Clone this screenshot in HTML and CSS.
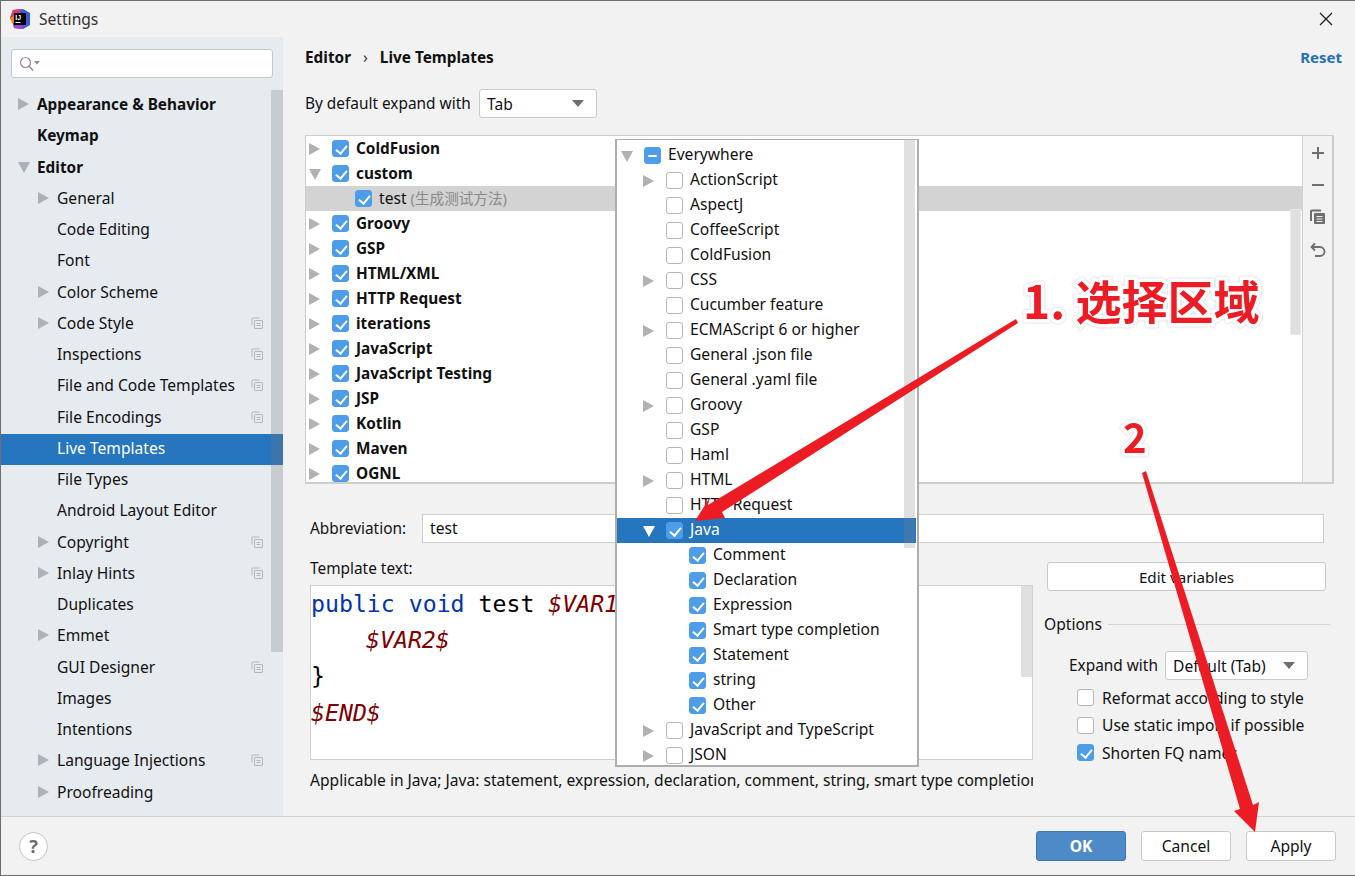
FILE: index.html
```html
<!DOCTYPE html>
<html lang="en">
<head>
<meta charset="utf-8">
<title>Settings</title>
<link rel="stylesheet" href="styles.css">
</head>
<body>
<svg class="defs" width="0" height="0" aria-hidden="true">
  <symbol id="copy" viewBox="0 0 12 12"><path d="M1 8.5V1.5a.5.5 0 0 1 .5-.5H8.500" fill="none" stroke="#b4b8bc"/><rect x="3.500" y="3.500" width="8" height="8" rx=".5" fill="none" stroke="#b4b8bc"/><path d="M5.500 6.500h4M5.500 8.500h4" stroke="#b4b8bc"/></symbol>
</svg>
<div class="window">
  <header class="titlebar">
    <svg class="logo" viewBox="0 0 20 20" width="20" height="20">
      <path d="M3 1 L13 0 L20 4 L20 16 L13 20 L4 19 L2 12 L0 9 Z" fill="#3b5bdb"/>
      <path d="M3 1 L10 0 L9 8 L2 12 L0 9 Z" fill="#e8336d"/>
      <path d="M0 9 L4 7 L5 14 L2 14 Z" fill="#f58220"/>
      <path d="M4 19 L10 20 L14 17 L5 15 Z" fill="#b23bd6"/>
      <rect x="4" y="4" width="12" height="12" fill="#000"/>
      <text x="5.200" y="10.500" class="logo-text">IJ</text>
      <rect x="5.500" y="13" width="5" height="1" fill="#fff"/>
    </svg>
    <span class="title">Settings</span>
    <svg class="close" viewBox="0 0 14 14" width="14" height="14"><path d="M1 1L13 13M13 1L1 13" stroke="#222" stroke-width="1.300" fill="none"/></svg>
  </header>
  <div class="body">
    <aside class="sidebar">
      <div class="search">
        <svg viewBox="0 0 22 16" width="22" height="16"><circle cx="6.500" cy="6.500" r="5" fill="none" stroke="#8a8f94" stroke-width="1.200"/><path d="M10 10L14 14.500" stroke="#8a8f94" stroke-width="1.500"/><path d="M15 5h6l-3 3.500z" fill="#8a8f94"/></svg>
      </div>
      <nav class="nav">
        <div class="nav-row l0 bold"><i class="tw r"></i><span>Appearance &amp; Behavior</span></div>
        <div class="nav-row l0 bold"><i class="tw"></i><span>Keymap</span></div>
        <div class="nav-row l0 bold"><i class="tw d"></i><span>Editor</span></div>
        <div class="nav-row l1"><i class="tw r"></i><span>General</span></div>
        <div class="nav-row l1"><i class="tw"></i><span>Code Editing</span></div>
        <div class="nav-row l1"><i class="tw"></i><span>Font</span></div>
        <div class="nav-row l1"><i class="tw r"></i><span>Color Scheme</span></div>
        <div class="nav-row l1"><i class="tw r"></i><span>Code Style</span><svg class="pc"><use href="#copy"/></svg></div>
        <div class="nav-row l1"><i class="tw"></i><span>Inspections</span><svg class="pc"><use href="#copy"/></svg></div>
        <div class="nav-row l1"><i class="tw"></i><span>File and Code Templates</span><svg class="pc"><use href="#copy"/></svg></div>
        <div class="nav-row l1"><i class="tw"></i><span>File Encodings</span><svg class="pc"><use href="#copy"/></svg></div>
        <div class="nav-row l1 sel"><i class="tw"></i><span>Live Templates</span></div>
        <div class="nav-row l1"><i class="tw"></i><span>File Types</span></div>
        <div class="nav-row l1"><i class="tw"></i><span>Android Layout Editor</span></div>
        <div class="nav-row l1"><i class="tw r"></i><span>Copyright</span><svg class="pc"><use href="#copy"/></svg></div>
        <div class="nav-row l1"><i class="tw r"></i><span>Inlay Hints</span><svg class="pc"><use href="#copy"/></svg></div>
        <div class="nav-row l1"><i class="tw"></i><span>Duplicates</span></div>
        <div class="nav-row l1"><i class="tw r"></i><span>Emmet</span></div>
        <div class="nav-row l1"><i class="tw"></i><span>GUI Designer</span><svg class="pc"><use href="#copy"/></svg></div>
        <div class="nav-row l1"><i class="tw"></i><span>Images</span></div>
        <div class="nav-row l1"><i class="tw"></i><span>Intentions</span></div>
        <div class="nav-row l1"><i class="tw r"></i><span>Language Injections</span><svg class="pc"><use href="#copy"/></svg></div>
        <div class="nav-row l1"><i class="tw r"></i><span>Proofreading</span></div>
      </nav>
      <div class="side-scroll"></div>
    </aside>
    <main class="main">
      <div class="crumbs"><b>Editor</b><span class="sep">›</span><b>Live Templates</b><a class="reset">Reset</a></div>
      <div class="expand-row"><span class="expand-label">By default expand with</span><div class="combo tab-combo"><span>Tab</span><i class="caret"></i></div></div>
      <section class="list-box">
        <div class="list">
          <div class="row bold"><i class="tw r"></i><i class="cb on"></i><span>ColdFusion</span></div>
          <div class="row bold"><i class="tw d"></i><i class="cb on"></i><span>custom</span></div>
          <div class="row child"><i class="cb on"></i><span>test <em class="desc">(生成测试方法)</em></span></div>
          <div class="row bold"><i class="tw r"></i><i class="cb on"></i><span>Groovy</span></div>
          <div class="row bold"><i class="tw r"></i><i class="cb on"></i><span>GSP</span></div>
          <div class="row bold"><i class="tw r"></i><i class="cb on"></i><span>HTML/XML</span></div>
          <div class="row bold"><i class="tw r"></i><i class="cb on"></i><span>HTTP Request</span></div>
          <div class="row bold"><i class="tw r"></i><i class="cb on"></i><span>iterations</span></div>
          <div class="row bold"><i class="tw r"></i><i class="cb on"></i><span>JavaScript</span></div>
          <div class="row bold"><i class="tw r"></i><i class="cb on"></i><span>JavaScript Testing</span></div>
          <div class="row bold"><i class="tw r"></i><i class="cb on"></i><span>JSP</span></div>
          <div class="row bold"><i class="tw r"></i><i class="cb on"></i><span>Kotlin</span></div>
          <div class="row bold"><i class="tw r"></i><i class="cb on"></i><span>Maven</span></div>
          <div class="row bold"><i class="tw r"></i><i class="cb on"></i><span>OGNL</span></div>
          <div class="list-scroll"></div>
        </div>
        <div class="tools">
          <svg viewBox="0 0 14 14" width="14" height="14"><path d="M7 1v12M1 7h12" stroke="#6e6e6e" stroke-width="2" fill="none"/></svg>
          <svg viewBox="0 0 14 14" width="14" height="14"><path d="M1 7h12" stroke="#6e6e6e" stroke-width="2" fill="none"/></svg>
          <svg viewBox="0 0 16 16" width="16" height="16"><path d="M1 12V2.500a1 1 0 0 1 1-1H11" fill="none" stroke="#6e6e6e" stroke-width="2"/><rect x="4" y="4" width="11" height="11" rx="1" fill="#6e6e6e"/><path d="M6.500 7.500h6M6.500 10h6M6.500 12.500h6" stroke="#f2f2f2"/></svg>
          <svg viewBox="0 0 16 16" width="16" height="16"><path d="M5 1.500L1.500 5 5 8.500" fill="none" stroke="#6e6e6e" stroke-width="1.800"/><path d="M2 5h8a4.500 4.500 0 0 1 0 9H5" fill="none" stroke="#6e6e6e" stroke-width="1.800"/></svg>
        </div>
      </section>
      <div class="abbr-row"><label>Abbreviation:</label><div class="field">test</div></div>
      <div class="lower">
        <div class="left-col">
          <div class="tpl-label">Template text:</div>
          <div class="editor">
            <div><span class="kw">public void</span> test <span class="var">$VAR1$</span></div>
            <div class="indent"><span class="var">$VAR2$</span></div>
            <div>}</div>
            <div><span class="var">$END$</span></div>
            <div class="ed-scroll"></div>
          </div>
          <div class="note">Applicable in Java; Java: statement, expression, declaration, comment, string, smart type completion, other</div>
        </div>
        <div class="right-col">
          <button class="btn edit">Edit variables</button>
          <div class="options-head"><span>Options</span><i></i></div>
          <div class="opt-expand"><span class="opt-label">Expand with</span><div class="combo def-combo"><span>Default (Tab)</span><i class="caret"></i></div></div>
          <div class="opt"><i class="cb"></i><span>Reformat according to style</span></div>
          <div class="opt"><i class="cb"></i><span>Use static import if possible</span></div>
          <div class="opt"><i class="cb on"></i><span>Shorten FQ names</span></div>
        </div>
      </div>
    </main>
  </div>
  <footer class="footer">
    <div class="help">?</div>
    <div class="actions">
      <button class="btn primary">OK</button>
      <button class="btn">Cancel</button>
      <button class="btn">Apply</button>
    </div>
  </footer>

  <div class="popup">
    <div class="prow"><i class="tw d"></i><i class="cb mixed"></i><span>Everywhere</span></div>
    <div class="prow p1"><i class="tw r"></i><i class="cb"></i><span>ActionScript</span></div>
    <div class="prow p1"><i class="tw"></i><i class="cb"></i><span>AspectJ</span></div>
    <div class="prow p1"><i class="tw"></i><i class="cb"></i><span>CoffeeScript</span></div>
    <div class="prow p1"><i class="tw"></i><i class="cb"></i><span>ColdFusion</span></div>
    <div class="prow p1"><i class="tw r"></i><i class="cb"></i><span>CSS</span></div>
    <div class="prow p1"><i class="tw"></i><i class="cb"></i><span>Cucumber feature</span></div>
    <div class="prow p1"><i class="tw r"></i><i class="cb"></i><span>ECMAScript 6 or higher</span></div>
    <div class="prow p1"><i class="tw"></i><i class="cb"></i><span>General .json file</span></div>
    <div class="prow p1"><i class="tw"></i><i class="cb"></i><span>General .yaml file</span></div>
    <div class="prow p1"><i class="tw r"></i><i class="cb"></i><span>Groovy</span></div>
    <div class="prow p1"><i class="tw"></i><i class="cb"></i><span>GSP</span></div>
    <div class="prow p1"><i class="tw"></i><i class="cb"></i><span>Haml</span></div>
    <div class="prow p1"><i class="tw r"></i><i class="cb"></i><span>HTML</span></div>
    <div class="prow p1"><i class="tw"></i><i class="cb"></i><span>HTTP Request</span></div>
    <div class="prow p1 psel"><i class="tw d"></i><i class="cb on"></i><span>Java</span></div>
    <div class="prow p2"><i class="cb on"></i><span>Comment</span></div>
    <div class="prow p2"><i class="cb on"></i><span>Declaration</span></div>
    <div class="prow p2"><i class="cb on"></i><span>Expression</span></div>
    <div class="prow p2"><i class="cb on"></i><span>Smart type completion</span></div>
    <div class="prow p2"><i class="cb on"></i><span>Statement</span></div>
    <div class="prow p2"><i class="cb on"></i><span>string</span></div>
    <div class="prow p2"><i class="cb on"></i><span>Other</span></div>
    <div class="prow p1"><i class="tw r"></i><i class="cb"></i><span>JavaScript and TypeScript</span></div>
    <div class="prow p1"><i class="tw r"></i><i class="cb"></i><span>JSON</span></div>
    <div class="pop-scroll"></div>
  </div>

  <svg class="arrows" viewBox="0 0 1355 876" width="1355" height="876">
    <polygon points="1016,319 708,505 710,497 695,521 725,518 722,512 1018,323" fill="#ed1c24"/>
    <polygon points="1142,473 1240,809 1234,811 1255,832 1259,802 1253,805 1146,471" fill="#ed1c24"/>
  </svg>
  <div class="note-a">1. 选择区域</div>
  <div class="note-b">2</div>
</div>
</body>
</html>
```
FILE: styles.css
```css
* { box-sizing: border-box; }
html, body { margin: 0; padding: 0; }
body {
  width: 1355px; height: 876px; overflow: hidden;
  font: 15.6px/20px "Noto Sans", "Noto Sans CJK SC", sans-serif;
  color: #111;
  background: #f2f2f2;
}
.defs { position: absolute; }
i, em { font-style: normal; }
.window {
  position: relative;
  width: 1355px; height: 876px;
  display: flex; flex-direction: column;
  border-top: 1px solid #6d6d6d;
  border-left: 1px solid #6d6d6d;
  border-bottom: 1px solid #6d6d6d;
  background: #f2f2f2;
  overflow: hidden;
}
.titlebar { height: 36px; flex: none; display: flex; align-items: center; padding: 0 22px 0 9px; }
.logo { flex: none; }
.logo-text { font: bold 7px "Liberation Sans", sans-serif; fill: #fff; }
.title { margin-left: 9px; color: #333; }
.close { margin-left: auto; }
.body { flex: 1; display: flex; min-height: 0; }

/* sidebar */
.sidebar { position: relative; width: 282px; flex: none; background: #e6ebf0; padding-top: 12px; overflow: hidden; }
.search { width: 262px; height: 29px; margin: 0 0 11.9px 10px; background: #fff; border: 1px solid #c4c7ca; border-radius: 3px; display: flex; align-items: center; padding-left: 7px; }
.nav-row { height: 31.25px; display: flex; align-items: center; }
.nav-row > * { margin-bottom: 3px; }
.nav-row .tw { margin-right: 8px; }
.l0 { padding-left: 17px; }
.l1 { padding-left: 37px; }
.bold { font-weight: 700; font-size: 15.35px; }
.sel { background: #2675bf; color: #fff; }
.pc { width: 12px; height: 12px; margin-left: auto; margin-right: 20px; }
.side-scroll { position: absolute; left: 270px; top: 53px; width: 12px; height: 562px; background: rgba(120, 120, 120, .266); }

/* twisties and checkboxes */
.tw { width: 11px; height: 12px; flex: none; display: block; position: relative; }
.tw.r::before { content: ""; position: absolute; left: 0; top: 0; border-left: 11px solid #afb1b3; border-top: 6px solid transparent; border-bottom: 6px solid transparent; }
.tw.d::before { content: ""; position: absolute; left: 0; top: 1px; border-top: 11px solid #afb1b3; border-left: 6px solid transparent; border-right: 6px solid transparent; }
.cb { width: 17px; height: 17px; flex: none; display: block; position: relative; margin-right: 7px; background: #fff; border: 1px solid #b6b6b6; border-radius: 3px; }
.cb.on, .cb.mixed { background: #4d9de8; border-color: #4d9de8; }
.cb.on::after { content: ""; position: absolute; left: 5px; top: 1.500px; width: 5px; height: 9px; border-right: 2px solid #fff; border-bottom: 2px solid #fff; transform: rotate(40deg); }
.cb.mixed::after { content: ""; position: absolute; left: 3px; top: 6.500px; width: 9px; height: 2px; background: #fff; border-radius: 1px; }

/* main */
.main { flex: 1; min-width: 0; padding: 0 21px 0 22px; }
.crumbs { height: 40px; display: flex; align-items: center; }
.crumbs b { font-weight: 700; font-size: 15.35px; }
.sep { margin: 0 12px 0 12px; color: #333; }
.reset { margin-left: auto; margin-right: -8px; color: #2470b3; font-weight: 700; font-size: 15px; }
.expand-row { margin-top: 12px; height: 29px; display: flex; align-items: center; }
.expand-label { width: 174px; flex: none; font-size: 15.4px; }
.combo { height: 29px; background: #fff; border: 1px solid #c9c9c9; border-radius: 3px; display: flex; align-items: center; padding: 0 12px 0 7px; }
.tab-combo { width: 118px; }
.caret { margin-left: auto; border-top: 7px solid #6e6e6e; border-left: 6.500px solid transparent; border-right: 6.500px solid transparent; }
.list-box { margin-top: 17px; height: 349px; display: flex; border: 1px solid #cdcdcd; border-width: 1px 2px 2px 1px; }
.list { position: relative; flex: 1; background: #fff; overflow: hidden; }
.row { height: 25px; display: flex; align-items: center; padding-left: 3px; }
.row span { margin-bottom: 2px; }
.row .tw { margin-right: 12px; }
.row.child { padding-left: 49px; background: #d3d3d3; }
.desc { color: #8a8a8a; font-size: 14.6px; }
.list-scroll { position: absolute; left: 984px; top: 73px; width: 11px; height: 126px; background: #e0e0e0; border: 1px solid #e9e9e9; }
.tools { width: 30px; flex: none; border-left: 1px solid #d0d0d0; display: flex; flex-direction: column; align-items: center; padding-top: 10px; gap: 18px; }
.tools svg:nth-child(3) { margin-top: -1px; }
.tools svg:nth-child(4) { margin-top: -1px; }
.abbr-row { margin-top: 30px; height: 29px; display: flex; align-items: center; padding: 0 10px 0 5px; }
.abbr-row label { width: 112px; flex: none; font-size: 15.4px; }
.field { flex: 1; height: 29px; background: #fff; border: 1px solid #cdcdcd; padding: 3px 7px; }
.lower { display: grid; grid-template-columns: 728px 286px; column-gap: 11px; margin-top: 15px; }
.left-col { padding-left: 5px; min-width: 0; }
.tpl-label { height: 20px; margin-bottom: 7px; padding-top: 1px; font-size: 15.4px; line-height: 20px; }
.editor { position: relative; height: 175px; background: #fff; border: 1px solid #d0d0d0; font: 23.2px/36.200px "DejaVu Sans Mono", monospace; color: #000; overflow: hidden; }
.indent { padding-left: 55px; }
.kw { color: #0033b3; }
.var { color: #7f0000; font-style: italic; }
.ed-scroll { position: absolute; left: 710px; top: 0; width: 11px; height: 91px; background: #e0e0e0; }
.note { margin-top: 10px; white-space: nowrap; overflow: hidden; }
.right-col { padding-top: 4px; }
.btn { font: inherit; color: #111; height: 30px; width: 90px; background: #fff; border: 1px solid #c8c8c8; border-radius: 3px; padding: 0; }
.btn.edit { display: block; width: 279px; height: 29px; margin-left: 3px; font-size: 15.2px; }
.options-head { margin-top: 23px; height: 20px; display: flex; align-items: center; }
.options-head i { flex: 1; height: 1px; background: #d4d4d4; margin-left: 6px; }
.opt-expand { margin-top: 17px; height: 29px; display: flex; align-items: center; padding-left: 25px; }
.opt-label { font-size: 15.4px; width: 96px; flex: none; }
.def-combo { width: 143px; }
.opt { height: 27.500px; display: flex; align-items: center; padding-left: 33px; margin-top: 0; }
.opt:nth-child(4) { margin-top: 4px; }
.opt .cb { margin-right: 8px; }

/* footer */
.footer { height: 59px; flex: none; border-top: 1px solid #d1d1d1; display: flex; align-items: center; padding: 0 19px 0 18px; }
.help { width: 29px; height: 29px; border-radius: 50%; background: #fff; border: 1px solid #c4c4c4; text-align: center; font: bold 18px/27px "Noto Sans", sans-serif; color: #6e6e6e; }
.actions { margin-left: auto; display: flex; gap: 15px; }
.btn.primary { background: #4e8ac8; border-color: #3d77b5; color: #fff; font-weight: 700; }

/* popup */
.popup { position: absolute; left: 614px; top: 138px; width: 304px; height: 628px; background: #fff; border: 2px solid #aeaeae; border-width: 1px 2px 2px 2px; padding-top: 3px; overflow: hidden; }
.prow { height: 25px; display: flex; align-items: center; padding-left: 4px; margin-right: 1px; }
.prow span { margin-bottom: 4px; }
.prow .tw { margin-right: 12px; }
.prow.p1 { padding-left: 26px; }
.prow.p2 { padding-left: 72px; }
.psel { background: #2675bf; color: #fff; }
.psel .tw.d::before { border-top-color: #fff; }
.pop-scroll { position: absolute; left: 287px; top: 0; width: 11px; height: 408px; background: rgba(130, 130, 130, .25); }

/* annotations */
.arrows { position: absolute; left: -1px; top: -1px; pointer-events: none; }
.note-a, .note-b {
  position: absolute;
  color: #ed1c24;
  font-family: "Noto Sans CJK SC", sans-serif;
  font-weight: 700;
  white-space: nowrap;
  -webkit-text-stroke: 7px #fff;
  paint-order: stroke fill;
  filter: drop-shadow(0 0 1px #c8c8c8);
}
.note-a { left: 1022px; top: 264px; font-size: 46px; line-height: 68px; }
.note-b { left: 1122px; top: 407px; font-size: 40px; line-height: 56px; }
```
